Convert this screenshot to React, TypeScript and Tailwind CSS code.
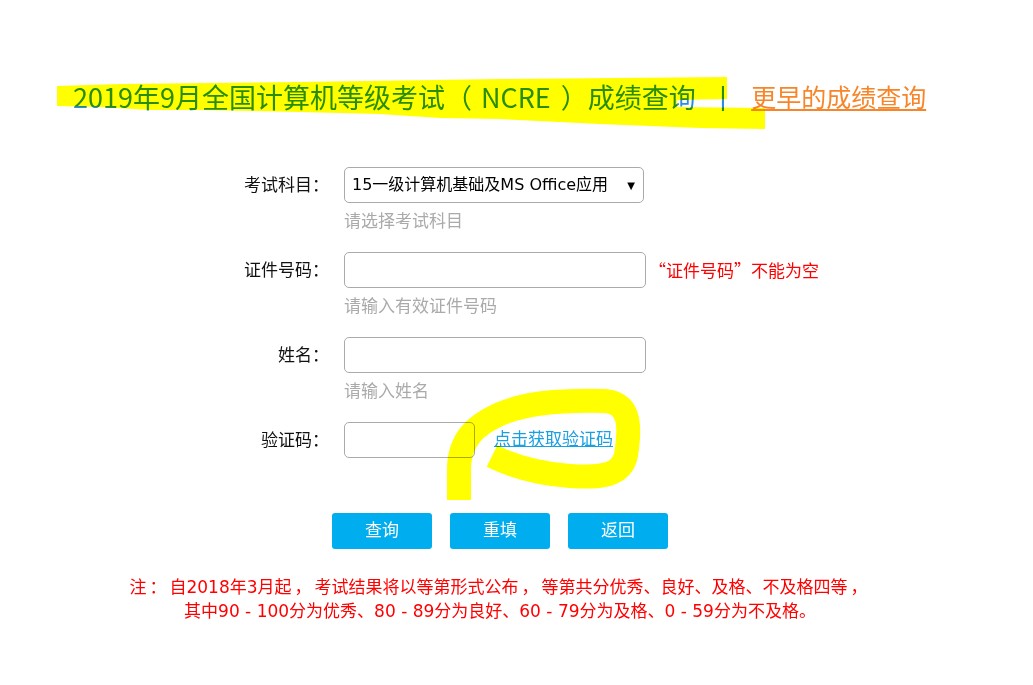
import { ReactNode } from "react";

interface RowProps {
  label: string;
  hint?: string;
  children: ReactNode;
}

function FormRow({ label, hint, children }: RowProps) {
  return (
    <div className="flex items-start mb-[19px]">
      <div className="w-[329px] h-[36px] leading-[36px] text-right text-[17px] text-[#111]">
        {label}
      </div>
      <div className="ml-[15px]">
        <div className="flex items-center h-[36px]">{children}</div>
        {hint && (
          <p className="mt-[6px] h-[24px] leading-[24px] text-[17px] text-[#aaaaaa]">
            {hint}
          </p>
        )}
      </div>
    </div>
  );
}

// yellow marker strokes drawn over the page
function Highlights() {
  return (
    <svg
      className="absolute left-0 top-0 pointer-events-none mix-blend-multiply"
      width={1033}
      height={685}
      viewBox="0 0 1033 685"
    >
      <polygon
        fill="#ffff00"
        points="57,86 120,84 300,82 500,79 727,77 727,99 677,100 677,107 765,108 765,129 700,128 600,124 500,119 440,118 380,114 300,112 200,110 150,110 100,107 57,106"
      />
      <path
        d="M 459 500 L 459 470 C 459 440 475 425 500 414 C 530 401 570 400 605 401 C 632 403 630 430 626 455 C 622 476 600 478 570 476 C 540 474 512 466 492 456"
        fill="none"
        stroke="#ffff00"
        strokeWidth={24}
      />
    </svg>
  );
}

const P = ({ c }: { c: string }) => <span className="px-[3px]">{c}</span>;

function App() {
  return (
    <div className="relative w-full h-[685px] overflow-hidden bg-white pt-[79px] font-['DejaVu_Sans','Noto_Sans_CJK_SC',sans-serif]">
      <div className="w-[1000px]">
        <div className="flex items-center h-[36px] pl-[73px]">
          <h1 className="text-[27px] text-[#2a8de4] font-normal whitespace-nowrap font-['Noto_Sans_CJK_SC',sans-serif]">
            2019年9月全国计算机等级考试（<span className="pl-[9px] pr-[10px]">NCRE</span>）成绩查询
          </h1>
          <span className="text-[25px] text-[#2a8de4] ml-[23px] mr-[24px]">|</span>
          <a href="#" className="text-[25px] text-[#f7862a] underline whitespace-nowrap font-['Noto_Sans_CJK_SC',sans-serif]">
            更早的成绩查询
          </a>
        </div>

        <div className="mt-[52px]">
          <FormRow label="考试科目：" hint="请选择考试科目">
            <div className="flex items-center justify-between w-[300px] h-[36px] border border-[#aaaaaa] rounded-[5px] pl-[7px] pr-[8px]">
              <span className="text-[16px] text-black whitespace-nowrap">
                15一级计算机基础及MS Office应用
              </span>
              <span className="text-[10px] text-black">▼</span>
            </div>
          </FormRow>
          <FormRow label="证件号码：" hint="请输入有效证件号码">
            <input className="w-[302px] h-[36px] border border-[#aaaaaa] rounded-[5px] px-2 outline-none" />
            <span className="ml-[3px] text-[17px] text-[#ff0000] whitespace-nowrap font-['Noto_Sans_CJK_SC',sans-serif]">
              “证件号码”不能为空
            </span>
          </FormRow>
          <FormRow label="姓名：" hint="请输入姓名">
            <input className="w-[302px] h-[36px] border border-[#aaaaaa] rounded-[5px] px-2 outline-none" />
          </FormRow>
          <FormRow label="验证码：">
            <input className="w-[131px] h-[36px] border border-[#aaaaaa] rounded-[5px] px-2 outline-none" />
            <a href="#" className="ml-[19px] text-[17px] text-[#1a9fe2] underline whitespace-nowrap">
              点击获取验证码
            </a>
          </FormRow>
        </div>

        <div className="flex justify-center gap-[18px] mt-[55px]">
          <button className="w-[100px] h-[36px] rounded-[3px] bg-[#00aeef] text-white text-[17px]">
            查询
          </button>
          <button className="w-[100px] h-[36px] rounded-[3px] bg-[#00aeef] text-white text-[17px]">
            重填
          </button>
          <button className="w-[100px] h-[36px] rounded-[3px] bg-[#00aeef] text-white text-[17px]">
            返回
          </button>
        </div>

        <div className="mt-[26px] text-center text-[17px] leading-[24px] text-[#ff0000]">
          <p>
            注<P c="：" />自2018年3月起<P c="，" />考试结果将以等第形式公布<P c="，" />等第共分优秀、良好、及格、不及格四等<P c="，" />
          </p>
          <p>其中90 - 100分为优秀、80 - 89分为良好、60 - 79分为及格、0 - 59分为不及格。</p>
        </div>
      </div>
      <Highlights />
    </div>
  );
}

export default App;
